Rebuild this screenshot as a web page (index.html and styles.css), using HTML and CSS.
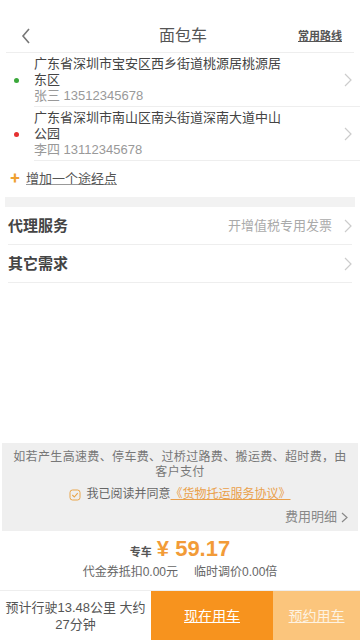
FILE: index.html
```html
<!DOCTYPE html>
<html lang="zh">
<head>
<meta charset="utf-8">
<link rel="stylesheet" href="styles.css">
</head>
<body>
<div class="page">
  <div class="status"></div>
  <header class="header">
    <span class="back"><svg width="12" height="18" viewBox="0 0 12 18"><path d="M9 2 L3 9 L9 16" fill="none" stroke="#777" stroke-width="1.6"/></svg></span>
    <span class="title">面包车</span>
    <span class="routes">常用路线</span>
  </header>
  <section class="addrs">
    <div class="addr">
      <span class="dot green"></span>
      <div class="addr-body">
        <div class="addr-text">广东省深圳市宝安区西乡街道桃源居桃源居<br>东区</div>
        <div class="contact">张三 13512345678</div>
      </div>
      <span class="chev"><svg width="8" height="14" viewBox="0 0 8 14"><path d="M1 1 L7 7 L1 13" fill="none" stroke="#ccc" stroke-width="1.2"/></svg></span>
    </div>
    <div class="addr">
      <span class="dot red"></span>
      <div class="addr-body">
        <div class="addr-text">广东省深圳市南山区南头街道深南大道中山<br>公园</div>
        <div class="contact">李四 13112345678</div>
      </div>
      <span class="chev"><svg width="8" height="14" viewBox="0 0 8 14"><path d="M1 1 L7 7 L1 13" fill="none" stroke="#ccc" stroke-width="1.2"/></svg></span>
    </div>
    <div class="add-way">
      <span class="plus">✚</span><span class="add-text">增加一个途经点</span>
    </div>
  </section>
  <div class="band"></div>
  <section class="opts">
    <div class="opt">
      <span class="opt-label">代理服务</span>
      <span class="opt-value">开增值税专用发票</span>
      <span class="chev"><svg width="8" height="14" viewBox="0 0 8 14"><path d="M1 1 L7 7 L1 13" fill="none" stroke="#ccc" stroke-width="1.2"/></svg></span>
    </div>
    <div class="opt">
      <span class="opt-label">其它需求</span>
      <span class="opt-value"></span>
      <span class="chev"><svg width="8" height="14" viewBox="0 0 8 14"><path d="M1 1 L7 7 L1 13" fill="none" stroke="#ccc" stroke-width="1.2"/></svg></span>
    </div>
  </section>
  <div class="spacer"></div>
  <section class="notice">
    <p class="fee-note">如若产生高速费、停车费、过桥过路费、搬运费、超时费，由客户支付</p>
    <div class="agree">
      <svg width="12" height="12" viewBox="0 0 12 12"><rect x="1" y="1" width="10" height="10" rx="2.5" fill="none" stroke="#e9a54a" stroke-width="1"/><path d="M3.3 6 L5.3 8 L8.7 4.2" fill="none" stroke="#e9a54a" stroke-width="1.1"/></svg>
      <span class="agree-text">我已阅读并同意</span><span class="agree-link">《货物托运服务协议》</span>
    </div>
    <div class="detail">费用明细 <svg width="7" height="11" viewBox="0 0 7 11"><path d="M1 1 L6 5.5 L1 10" fill="none" stroke="#888" stroke-width="1.2"/></svg></div>
  </section>
  <section class="price">
    <div class="price-main"><span class="price-tag">专车</span><span class="price-num">¥ 59.17</span></div>
    <div class="price-sub"><span>代金券抵扣0.00元</span><span>临时调价0.00倍</span></div>
  </section>
  <footer class="bar">
    <div class="est">预计行驶13.48公里 大约<br>27分钟</div>
    <div class="btn now"><span>现在用车</span></div>
    <div class="btn book"><span>预约用车</span></div>
  </footer>
</div>
</body>
</html>
```
FILE: styles.css
```css
* { box-sizing: border-box; }
html, body { margin: 0; padding: 0; background: #fff; }
body { font-family: "Liberation Sans", "Noto Sans CJK SC", sans-serif; color: #444; line-height: 1.2; }
.page { width: 360px; height: 640px; display: flex; flex-direction: column; overflow: hidden; }
.status { height: 20px; }
.header { height: 33px; display: flex; align-items: center; border-bottom: 1px solid #eee; margin: 0 6px; padding-left: 14px; padding-right: 12px; }
.back { display: flex; align-items: center; width: 40px; }
.title { flex: 1; text-align: center; font-size: 16px; line-height: 20px; color: #555; margin-left: 20px; }
.routes { width: 56px; text-align: right; font-size: 11px; line-height: 14px; font-weight: bold; color: #555; text-decoration: underline; }
.addr { display: flex; align-items: center; padding-left: 14px; padding-right: 8px; }
.dot { width: 5px; height: 5px; border-radius: 50%; margin-right: 15px; flex: none; }
.dot.green { background: #3aa83a; }
.dot.red { background: #e53030; }
.addr-body { flex: 1; border-bottom: 1px solid #eee; padding: 3px 0 2px; }
.addr-text { font-size: 13px; line-height: 16px; color: #444; }
.contact { font-size: 13px; line-height: 16px; color: #999; }
.addr .chev { margin-left: -20px; }
.chev { display: flex; align-items: center; width: 12px; justify-content: flex-end; }
.add-way { height: 36px; display: flex; align-items: center; padding-left: 10px; }
.plus { color: #f0a030; font-size: 10px; line-height: 12px; margin-right: 6px; }
.add-text { font-size: 13px; line-height: 16px; color: #555; text-decoration: underline; text-decoration-color: #999; }
.band { height: 10px; background: #f2f2f2; margin: 0 5px; }
.opts { padding: 0 8px; }
.opt { height: 38px; display: flex; align-items: center; border-bottom: 1px solid #eee; }
.opt-label { font-size: 15px; line-height: 18px; font-weight: bold; color: #444; flex: none; }
.opt-value { flex: 1; text-align: right; font-size: 13px; line-height: 16px; color: #aaa; margin-right: 8px; }
.spacer { flex: 1; }
.notice { background: #efefef; margin: 0 2px; padding: 7px 6px 6px; height: 88px; }
.fee-note { margin: 0; font-size: 12px; line-height: 15px; color: #777; text-align: center; letter-spacing: 0.35px; }
.agree { display: flex; align-items: center; justify-content: center; font-size: 12px; line-height: 15px; margin-top: 7px; height: 15px; }
.agree svg { margin-right: 5px; }
.agree-text { color: #666; }
.agree-link { color: #eaa04a; text-decoration: underline; }
.detail { font-size: 13px; line-height: 16px; color: #888; margin-top: 7px; display: flex; justify-content: flex-end; align-items: center; gap: 4px; padding-right: 4px; }
.price { height: 60px; display: flex; flex-direction: column; align-items: center; border-bottom: 1px solid #eee; padding-top: 3px; }
.price-main { display: flex; align-items: baseline; }
.price-tag { font-size: 11px; font-weight: bold; color: #555; margin-right: 5px; }
.price-num { font-size: 22px; font-weight: bold; color: #f29b38; line-height: 30px; }
.price-sub { font-size: 12px; line-height: 15px; color: #666; display: flex; gap: 16px; margin-top: 1px; }
.bar { height: 49px; display: flex; }
.est { width: 151px; display: flex; align-items: center; justify-content: center; text-align: center; font-size: 13px; line-height: 17px; color: #555; }
.btn { display: flex; align-items: center; justify-content: center; font-size: 14px; line-height: 18px; color: #fff; }
.btn span { text-decoration: underline; }
.now { width: 122px; background: #f7931e; }
.book { flex: 1; background: #fbc57c; color: #fdf3e3; }
```
